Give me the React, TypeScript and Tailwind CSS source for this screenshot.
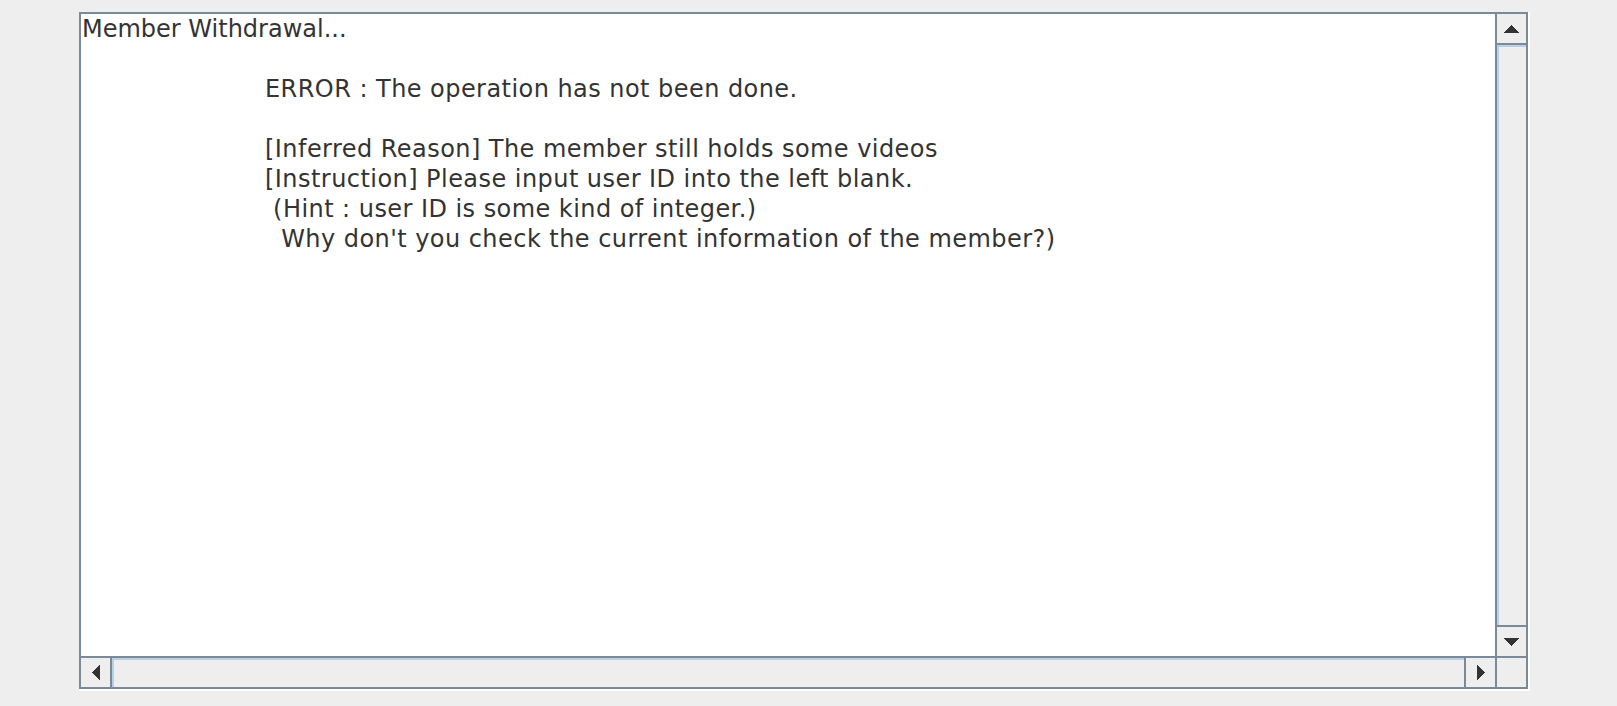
import React from "react";

const message = `ERROR : The operation has not been done.

[Inferred Reason] The member still holds some videos
[Instruction] Please input user ID into the left blank.
 (Hint : user ID is some kind of integer.)
  Why don't you check the current information of the member?)`;

function Arrow({ dir }: { dir: "up" | "down" | "left" | "right" }) {
  const pts = {
    up: "0,8 7,0 8,0 15,8",
    down: "0,0 15,0 8,8 7,8",
    left: "8,0 8,15 0,8 0,7",
    right: "0,0 8,7 8,8 0,15",
  }[dir];
  const vertical = dir === "up" || dir === "down";
  return (
    <svg
      width={vertical ? 15 : 8}
      height={vertical ? 8 : 15}
      viewBox={vertical ? "0 0 15 8" : "0 0 8 15"}
      shapeRendering="crispEdges"
    >
      <polygon points={pts} fill="#333333" />
    </svg>
  );
}

function ScrollButton({
  dir,
  className,
}: {
  dir: "up" | "down" | "left" | "right";
  className: string;
}) {
  return (
    <div
      className={`flex shrink-0 items-center justify-center bg-[#eeeeee] ${className}`}
    >
      <Arrow dir={dir} />
    </div>
  );
}

export default function App() {
  return (
    <div className="h-[706px] w-[1617px] overflow-hidden bg-[#eeeeee] pl-[79px] pt-[12px]">
      <div className="h-[679px] w-[1451px] border-b-2 border-r-2 border-white">
        <div className="flex h-full flex-col border-2 border-[#7a8a99]">
          <div className="flex min-h-0 flex-1">
            <div
              className="flex-1 overflow-hidden whitespace-pre bg-white pl-[1px] text-[24px] leading-[30px] text-[#333333]"
              style={{ fontFamily: '"DejaVu Sans", sans-serif' }}
            >
              <div>Member Withdrawal...</div>
              <div className="h-[30px]" />
              <div className="pl-[183px] tracking-[0.45px]">{message}</div>
            </div>
            <div className="flex w-[31px] shrink-0 flex-col border-l-2 border-[#7a8a99] bg-[#eeeeee]">
              <ScrollButton dir="up" className="h-[31px] border-b-2 border-[#7a8a99]" />
              <div className="flex-1 border-l-2 border-t-2 border-[#b8cfe5]" />
              <ScrollButton dir="down" className="h-[31px] border-t-2 border-[#7a8a99]" />
            </div>
          </div>
          <div className="flex h-[31px] shrink-0 border-t-2 border-[#7a8a99] bg-[#eeeeee]">
            <ScrollButton dir="left" className="w-[31px] border-r-2 border-[#7a8a99]" />
            <div className="flex-1 border-l-2 border-t-2 border-[#b8cfe5]" />
            <ScrollButton dir="right" className="w-[31px] border-l-2 border-[#7a8a99]" />
            <div className="w-[31px] shrink-0 border-l-2 border-[#7a8a99] bg-[#eeeeee]" />
          </div>
        </div>
      </div>
    </div>
  );
}
